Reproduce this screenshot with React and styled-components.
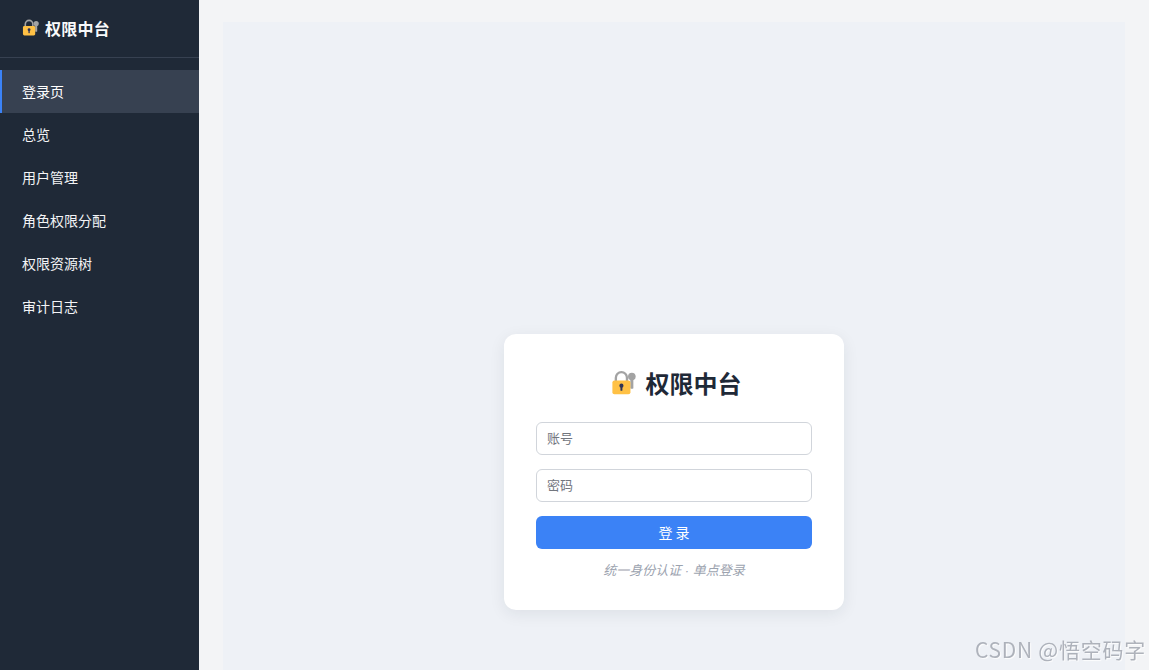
import React from "react";
import styled, { createGlobalStyle } from "styled-components";

const Global = createGlobalStyle`
  html, body { margin: 0; padding: 0; height: 100%; overflow: hidden; }
  body { font-family: "Noto Sans CJK SC", "Liberation Sans", sans-serif; background: #f3f4f6; }
  * { box-sizing: border-box; }
  input::placeholder { color: #72767e; opacity: 1; }
`;

const Shell = styled.div`
  display: flex;
  width: 100%;
  height: 100vh;
  overflow: hidden;
`;

const Sidebar = styled.aside`
  flex: 0 0 199px;
  background: #1f2937;
  color: #f3f4f6;
`;

const Brand = styled.div`
  height: 58px;
  padding: 0 22px 2px 22px;
  display: flex;
  align-items: center;
  gap: 6px;
  border-bottom: 1px solid #374151;
  font-size: 16px;
  letter-spacing: 0.25px;
  font-weight: 700;
  color: #f9fafb;
`;

const Nav = styled.nav`
  display: flex;
  flex-direction: column;
  padding-top: 12px;
`;

const NavItem = styled.div`
  height: 43px;
  display: flex;
  align-items: center;
  padding-left: ${(p) => (p.$active ? "20px" : "22px")};
  padding-bottom: 2px;
  font-size: 14px;
  color: ${(p) => (p.$active ? "#ffffff" : "#f3f4f6")};
  background: ${(p) => (p.$active ? "#374151" : "transparent")};
  border-left: ${(p) => (p.$active ? "2px solid #3b82f6" : "none")};
`;

const Main = styled.main`
  flex: 1;
  min-width: 0;
  padding: 22px 24px 0;
  background: #f3f4f6;
`;

const Stage = styled.section`
  height: 900px;
  background: #eef1f6;
  display: flex;
  align-items: center;
  justify-content: center;
`;

const Card = styled.form`
  width: 340px;
  height: 276px;
  padding: 32px;
  background: #ffffff;
  border-radius: 12px;
  box-shadow: 0 4px 16px rgba(31, 41, 55, 0.08);
  display: flex;
  flex-direction: column;
  & > * { flex-shrink: 0; }
`;

const Title = styled.h1`
  margin: 0 0 20px;
  height: 36px;
  padding: 0 0 3px 4px;
  display: flex;
  align-items: center;
  justify-content: center;
  gap: 10px;
  font-size: 24px;
  line-height: 33px;
  font-weight: 700;
  color: #1f2937;
`;

const Field = styled.input`
  height: 33px;
  margin-bottom: 14px;
  padding: 0 10px 2px;
  border: 1px solid #d1d5db;
  border-radius: 6px;
  background: #ffffff;
  font: 13px "Noto Sans CJK SC", "Liberation Sans", sans-serif;
  color: #1f2937;
  outline: none;
`;

const Submit = styled.button`
  height: 33px;
  padding: 0 0 1px;
  border: none;
  border-radius: 6px;
  background: #3b82f6;
  color: #ffffff;
  font: 14px "Noto Sans CJK SC", "Liberation Sans", sans-serif;
`;

const Hint = styled.p`
  margin: 13px 0 0;
  text-align: center;
  font-family: "Liberation Sans", "Noto Sans CJK SC", sans-serif;
  font-size: 13px;
  line-height: 17px;
  font-style: italic;
  color: #9ca3af;
`;

const Watermark = styled.div`
  position: fixed;
  right: 3px;
  bottom: 7px;
  font-size: 21px;
  line-height: 28px;
  letter-spacing: 0.75px;
  color: rgba(150, 155, 165, 0.75);
  text-shadow: 1px 1px 1px rgba(255, 255, 255, 0.9);
  white-space: nowrap;
`;

function LockIcon({ size }) {
  return (
    <svg width={size} height={size} viewBox="0 0 36 36" aria-hidden="true">
      <path d="M7 18v-7a8 8 0 0 1 16 0v7" fill="none" stroke="#a3a3a3" strokeWidth="3.4" />
      <circle cx="30" cy="9.5" r="5.5" fill="#a3a3a3" />
      <rect x="27.8" y="10" width="4.4" height="17" rx="1" fill="#a3a3a3" />
      <rect x="2" y="15" width="26" height="20" rx="3" fill="#ffc145" />
      <circle cx="15" cy="22.5" r="3" fill="#2f3355" />
      <rect x="13.6" y="23" width="2.8" height="7" rx="1" fill="#2f3355" />
    </svg>
  );
}

const items = ["登录页", "总览", "用户管理", "角色权限分配", "权限资源树", "审计日志"];

export default function App() {
  return (
    <>
      <Global />
      <Shell>
        <Sidebar>
          <Brand>
            <LockIcon size={17} />
            <span>权限中台</span>
          </Brand>
          <Nav>
            {items.map((t, i) => (
              <NavItem key={t} $active={i === 0}>{t}</NavItem>
            ))}
          </Nav>
        </Sidebar>
        <Main>
          <Stage>
            <Card onSubmit={(e) => e.preventDefault()}>
              <Title>
                <LockIcon size={25} />
                <span>权限中台</span>
              </Title>
              <Field placeholder="账号" />
              <Field placeholder="密码" type="password" />
              <Submit type="submit">登 录</Submit>
              <Hint>统一身份认证 · 单点登录</Hint>
            </Card>
          </Stage>
        </Main>
      </Shell>
      <Watermark>CSDN @悟空码字</Watermark>
    </>
  );
}
